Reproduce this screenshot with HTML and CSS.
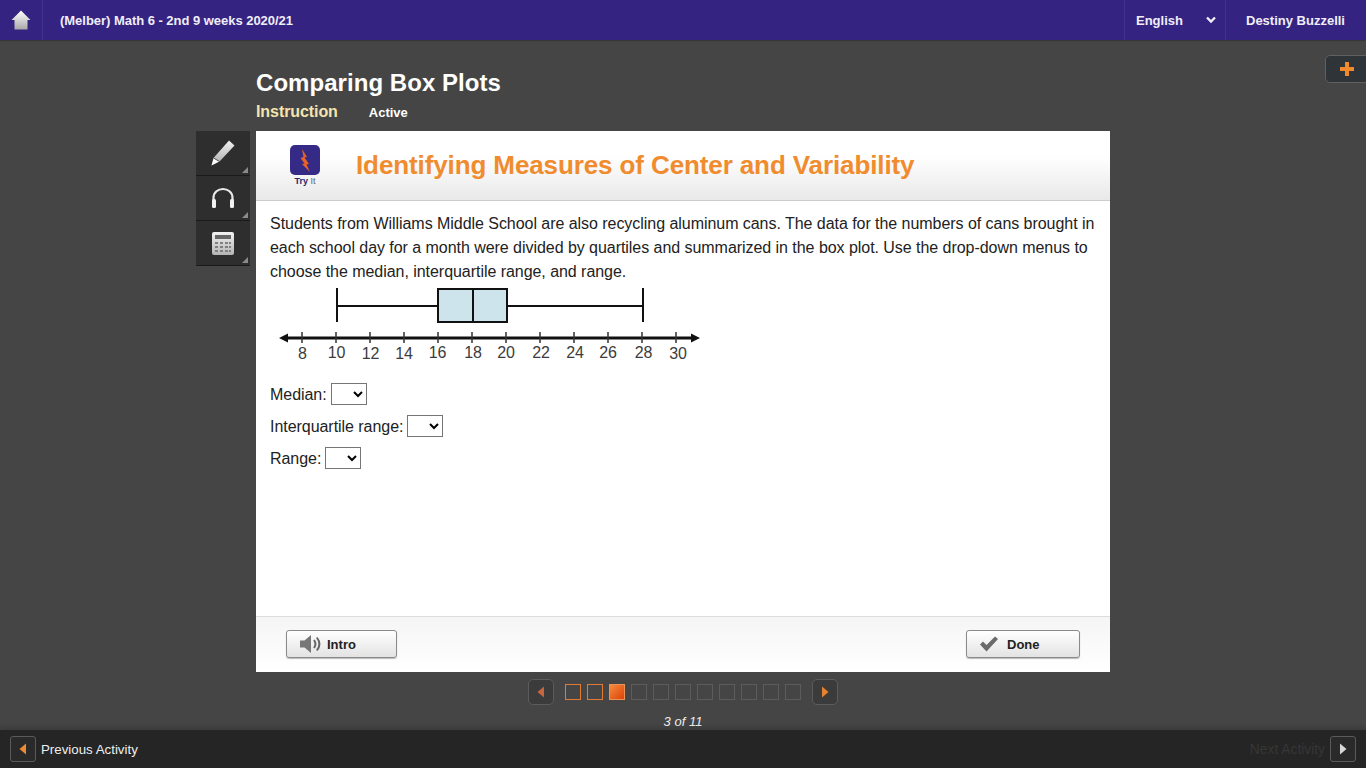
FILE: index.html
```html
<!DOCTYPE html>
<html lang="en">
<head>
    <meta charset="UTF-8">
    <title>Comparing Box Plots</title>
    <link rel="stylesheet" href="styles.css">
</head>
<body>
    <header class="topbar">
        <a class="home-cell" href="#" aria-label="Home">
            <svg width="20" height="20" viewBox="0 0 20 20">
                <defs>
                    <linearGradient id="homeFill" x1="0" y1="0" x2="0" y2="1">
                        <stop offset="0" stop-color="#ffffff"/>
                        <stop offset="1" stop-color="#a9a9a9"/>
                    </linearGradient>
                </defs>
                <path d="M10 0.500 L19.500 10 H16.500 V19.500 H3.500 V10 H0.500 Z" fill="url(#homeFill)"/>
            </svg>
        </a>
        <div class="course-title">(Melber) Math 6 - 2nd 9 weeks 2020/21</div>
        <div class="lang-cell">
            <span>English</span>
            <svg width="10" height="8" viewBox="0 0 10 8"><path d="M1 1.500 L5 5.500 L9 1.500" fill="none" stroke="#f0eef8" stroke-width="2.400"/></svg>
        </div>
        <div class="user-cell">Destiny Buzzelli</div>
    </header>

    <button class="side-toggle" aria-label="Expand">
        <svg width="14" height="14" viewBox="0 0 14 14"><path d="M5 0 H9 V5 H14 V9 H9 V14 H5 V9 H0 V5 H5 Z" fill="#f08a2c"/></svg>
    </button>

    <main class="stage">
        <div class="heading">
            <h1>Comparing Box Plots</h1>
            <div class="subheading">
                <span class="sub-type">Instruction</span>
                <span class="sub-status">Active</span>
            </div>
        </div>

        <div class="tools">
            <div class="tool">
                <svg width="26" height="28" viewBox="0 0 26 28">
                    <defs>
                        <linearGradient id="toolFill" x1="0" y1="0" x2="0" y2="1">
                            <stop offset="0" stop-color="#f2f2f2"/>
                            <stop offset="1" stop-color="#b4b4b4"/>
                        </linearGradient>
                    </defs>
                    <path d="M19 1.500 L24.500 6.500 L9.500 22.500 L3.500 19 Z" fill="url(#toolFill)"/>
                    <path d="M3.500 19 L9.500 22.500 L1.500 26.500 Z" fill="#ffffff"/>
                    <path d="M3.500 19 L9.500 22.500" stroke="#555" stroke-width="1"/>
                </svg>
            </div>
            <div class="tool">
                <svg width="26" height="24" viewBox="0 0 26 24">
                    <path d="M3.500 17 V12 C3.500 0 22.500 0 22.500 12 V17" fill="none" stroke="#e8e8e8" stroke-width="2.200"/>
                    <rect x="2" y="13" width="4" height="9" rx="1.500" fill="#f2f2f2"/>
                    <rect x="20" y="13" width="4" height="9" rx="1.500" fill="#f2f2f2"/>
                </svg>
            </div>
            <div class="tool">
                <svg width="22" height="23" viewBox="0 0 22 23">
                    <rect width="22" height="23" rx="2" fill="url(#toolFill)"/>
                    <rect x="3" y="3" width="16" height="4" fill="#666"/>
                    <path d="M3 10 h3 v2 h-3 z M8 10 h3 v2 h-3 z M13 10 h3 v2 h-3 z M17 10 h2 v2 h-2 z M3 14 h3 v2 h-3 z M8 14 h3 v2 h-3 z M13 14 h3 v2 h-3 z M17 14 h2 v2 h-2 z M3 18 h3 v2 h-3 z M8 18 h3 v2 h-3 z M13 18 h3 v2 h-3 z M17 18 h2 v2 h-2 z" fill="#808080"/>
                </svg>
            </div>
        </div>

        <section class="card">
            <div class="card-header">
                <div class="try-it">
                    <svg width="30" height="30" viewBox="0 0 30 30">
                        <rect width="30" height="30" rx="5" fill="#352a85"/>
                        <path d="M12 4 L17 12 L14.500 12.500 L19 19 L16.500 19.500 L20 27 L12 19 L14.500 18.500 L10.500 13 L13.500 12 Z" fill="#e8622a"/>
                    </svg>
                    <div class="try-label"><b>Try</b> It</div>
                </div>
                <h2>Identifying Measures of Center and Variability</h2>
            </div>

            <div class="card-body">
                <p>Students from Williams Middle School are also recycling aluminum cans. The data for the numbers of cans brought in each school day for a month were divided by quartiles and summarized in the box plot. Use the drop-down menus to choose the median, interquartile range, and range.</p>

                <svg class="plot" width="440" height="84" viewBox="0 0 440 84">
                    <g fill="none" stroke="#111" stroke-width="2">
                        <path d="M67 5 V39 M373 5 V39 M67 23 H168 M237 23 H373"/>
                        <rect x="168" y="6" width="69" height="33" fill="#cde4ec"/>
                        <path d="M203 6 V39"/>
                    </g>
                    <path d="M15 55 H423" stroke="#111" stroke-width="3"/>
                    <path d="M9 55 L18 50.500 V59.500 Z M430 55 L421 50.500 V59.500 Z" fill="#111"/>
                    <path d="M32 49 V60 M66 49 V60 M100 49 V60 M134 49 V60 M168 49 V60 M202 49 V60 M236 49 V60 M270 49 V60 M304 49 V60 M338 49 V60 M372 49 V60 M406 49 V60" stroke="#333" stroke-width="1.500"/>
                    <g class="plot-labels" text-anchor="middle">
                        <text x="32.500" y="76">8</text>
                        <text x="66.500" y="75">10</text>
                        <text x="100.500" y="76">12</text>
                        <text x="134" y="76">14</text>
                        <text x="167.500" y="75">16</text>
                        <text x="203" y="75">18</text>
                        <text x="236" y="75">20</text>
                        <text x="271" y="75">22</text>
                        <text x="305" y="75">24</text>
                        <text x="338" y="75">26</text>
                        <text x="373.500" y="75">28</text>
                        <text x="408" y="76">30</text>
                    </g>
                </svg>

                <div class="answers">
                    <div class="answer">Median: <select aria-label="Median"><option></option></select></div>
                    <div class="answer">Interquartile range: <select aria-label="Interquartile range"><option></option></select></div>
                    <div class="answer">Range: <select aria-label="Range"><option></option></select></div>
                </div>
            </div>

            <div class="card-footer">
                <button class="btn btn-intro">
                    <svg width="22" height="20" viewBox="0 0 22 20">
                        <path d="M1 6.500 H5.500 L12 1 V19 L5.500 13.500 H1 Z" fill="#777"/>
                        <path d="M15 6 C16.800 8.500 16.800 11.500 15 14 M17.800 3.500 C21 7.500 21 12.500 17.800 16.500" fill="none" stroke="#666" stroke-width="2"/>
                    </svg>
                    Intro
                </button>
                <button class="btn btn-done">
                    <svg width="20" height="16" viewBox="0 0 20 16">
                        <path d="M1 8.500 L4 5.500 L7.500 9 L16 0.500 L19 3 L7.500 15.500 Z" fill="#6a6a6a"/>
                    </svg>
                    Done
                </button>
            </div>
        </section>

        <div class="pager-wrap">
            <div class="pager">
                <button class="page-arrow" aria-label="Previous page">
                    <svg width="8" height="12" viewBox="0 0 8 12"><path d="M7 0.500 V11.500 L0.500 6 Z" fill="#c9653c"/></svg>
                </button>
                <div class="page-squares">
                    <span class="square done"></span>
                    <span class="square done"></span>
                    <span class="square current"></span>
                    <span class="square"></span>
                    <span class="square"></span>
                    <span class="square"></span>
                    <span class="square"></span>
                    <span class="square"></span>
                    <span class="square"></span>
                    <span class="square"></span>
                    <span class="square"></span>
                </div>
                <button class="page-arrow" aria-label="Next page">
                    <svg width="8" height="12" viewBox="0 0 8 12"><path d="M1 0.500 V11.500 L7.500 6 Z" fill="#e8822e"/></svg>
                </button>
            </div>
            <div class="page-count">3 of 11</div>
        </div>
    </main>

    <footer class="activity-bar">
        <div class="activity-link">
            <button class="activity-btn" aria-label="Previous Activity">
                <svg width="8" height="12" viewBox="0 0 8 12"><path d="M7 0.500 V11.500 L0.500 6 Z" fill="#ee8a30"/></svg>
            </button>
            <span>Previous Activity</span>
        </div>
        <div class="activity-link disabled">
            <span class="next-label">Next Activity</span>
            <button class="activity-btn" aria-label="Next Activity">
                <svg width="8" height="12" viewBox="0 0 8 12"><path d="M1 0.500 V11.500 L7.500 6 Z" fill="#d8d8d8"/></svg>
            </button>
        </div>
    </footer>
</body>
</html>
```

FILE: styles.css
```css
* {
    margin: 0;
    padding: 0;
    box-sizing: border-box;
    font-family: "Liberation Sans", Arial, sans-serif;
}

body {
    height: 100vh;
    overflow: hidden;
    display: flex;
    flex-direction: column;
    background-color: #454545;
    position: relative;
}

/* Top bar */
.topbar {
    height: 40px;
    display: flex;
    align-items: stretch;
    background-color: #352381;
    box-shadow: 0 1px 1px rgba(0, 0, 0, 0.2);
    color: #f0eef8;
    font-size: 13px;
    font-weight: bold;
    line-height: 41px;
}

.home-cell {
    width: 43px;
    display: flex;
    align-items: center;
    justify-content: center;
    padding-bottom: 1px;
    border-right: 1px solid #42318f;
}

.course-title {
    flex: 1;
    padding-left: 17px;
    letter-spacing: -0.03px;
}

.lang-cell {
    width: 101px;
    display: flex;
    align-items: center;
    justify-content: space-between;
    padding: 0 9px 0 11px;
    border-left: 1px solid #42318f;
}

.user-cell {
    width: 141px;
    padding-left: 20px;
    border-left: 1px solid #42318f;
}

.side-toggle {
    position: absolute;
    top: 55px;
    right: -4px;
    width: 45px;
    height: 28px;
    padding-right: 2px;
    display: flex;
    align-items: center;
    justify-content: center;
    background-color: #2f3439;
    border: 1px solid #606060;
    border-radius: 5px;
}

/* Main stage */
.stage {
    flex: 1;
    display: grid;
    grid-template-columns: 1fr 854px 1fr;
    grid-template-rows: 91px 541px auto;
    align-content: start;
}

.heading {
    grid-column: 2;
    padding-top: 28px;
}

.heading h1 {
    font-size: 24px;
    line-height: 30px;
    color: #fff;
    letter-spacing: 0.05px;
}

.subheading {
    display: flex;
    align-items: baseline;
    gap: 31px;
    margin-top: 3px;
    line-height: 22px;
    font-weight: bold;
}

.sub-type {
    font-size: 16px;
    color: #f5e4ae;
    letter-spacing: -0.08px;
}

.sub-status {
    font-size: 13px;
    color: #fff;
}

/* Tools */
.tools {
    grid-column: 1;
    grid-row: 2;
    justify-self: end;
    width: 54px;
    margin-right: 6px;
    align-self: start;
}

.tool {
    height: 45px;
    position: relative;
    display: flex;
    align-items: center;
    justify-content: center;
    background-color: #2e2e2e;
    border-bottom: 1px solid #1a1a1a;
}

.tool::after {
    content: '';
    position: absolute;
    right: 2px;
    bottom: 2px;
    border-style: solid;
    border-width: 0 0 6px 6px;
    border-color: transparent transparent #8a8a8a transparent;
}

/* Activity card */
.card {
    grid-column: 2;
    grid-row: 2;
    display: flex;
    flex-direction: column;
    background-color: #fff;
}

.card-header {
    height: 70px;
    display: flex;
    align-items: center;
    padding-left: 34px;
    background: linear-gradient(#fff 35%, #e9e9e9);
    border-bottom: 1px solid #ccc;
}

.try-it {
    width: 30px;
    margin-right: 36px;
    display: flex;
    flex-direction: column;
    align-items: center;
    padding-top: 1px;
}

.try-label {
    font-size: 9px;
    line-height: 13px;
    color: #666;
    white-space: nowrap;
}

.try-label b {
    color: #2c2566;
}

.card-header h2 {
    font-size: 26px;
    color: #f08c2e;
    letter-spacing: -0.11px;
}

.card-body {
    flex: 1;
    padding: 11px 14px 0;
    color: #222;
    font-size: 16px;
    line-height: 24px;
    letter-spacing: -0.045px;
}

.plot {
    display: block;
    margin-top: -1px;
}

.plot-labels text {
    font-size: 16px;
    fill: #3c3c3c;
}

.answers {
    margin-top: 12px;
}

.answer {
    height: 32px;
    display: flex;
    align-items: center;
    gap: 4px;
}

.answer select {
    width: 36px;
    height: 22px;
    margin-top: -2px;
    font-size: 13px;
    background-color: #fff;
}

.card-footer {
    height: 56px;
    display: flex;
    justify-content: space-between;
    align-items: flex-start;
    padding: 13px 30px 0;
    background: linear-gradient(#f5f5f5, #fff);
    border-top: 1px solid #ddd;
}

.btn {
    height: 28px;
    display: flex;
    align-items: center;
    font-size: 13px;
    font-weight: bold;
    color: #222;
    background: linear-gradient(#fff, #e3e3e3);
    border: 1px solid #8a8a8a;
    border-radius: 3px;
    box-shadow: 0 1px 1px #bbb;
}

.btn-intro {
    width: 111px;
    padding-left: 12px;
    gap: 6px;
}

.btn-done {
    width: 114px;
    padding-left: 12px;
    gap: 8px;
}

/* Pager */
.pager-wrap {
    grid-column: 2;
    grid-row: 3;
    display: flex;
    flex-direction: column;
    align-items: center;
    padding-top: 7px;
}

.pager {
    display: flex;
    align-items: center;
    gap: 11px;
}

.page-arrow {
    width: 26px;
    height: 26px;
    display: flex;
    align-items: center;
    justify-content: center;
    background-color: #3b3b3b;
    border: 1px solid #5c5c5c;
    border-radius: 5px;
}

.page-squares {
    display: flex;
    gap: 6px;
}

.square {
    width: 16px;
    height: 16px;
    border: 1px solid #5c5c5c;
}

.square.done {
    border-color: #e07b35;
}

.square.current {
    border-color: #e8935a;
    background: linear-gradient(135deg, #f58a3c, #dc4208);
}

.page-count {
    margin-top: 9px;
    font-size: 13px;
    line-height: 16px;
    font-style: italic;
    color: #eee;
}

/* Activity bar */
.activity-bar {
    height: 41px;
    display: flex;
    justify-content: space-between;
    align-items: center;
    padding: 0 10px;
    background-color: #252525;
    box-shadow: 0 -3px 4px rgba(0, 0, 0, 0.15);
    font-size: 13.3px;
    color: #eee;
}

.activity-link {
    display: flex;
    align-items: center;
    gap: 5px;
}

.activity-link.disabled {
    color: #363636;
}

.next-label {
    font-size: 13.8px;
}

.activity-btn {
    width: 26px;
    height: 26px;
    display: flex;
    align-items: center;
    justify-content: center;
    background-color: #2a2a2a;
    border: 1px solid #5a5a5a;
    border-radius: 3px;
}
```
